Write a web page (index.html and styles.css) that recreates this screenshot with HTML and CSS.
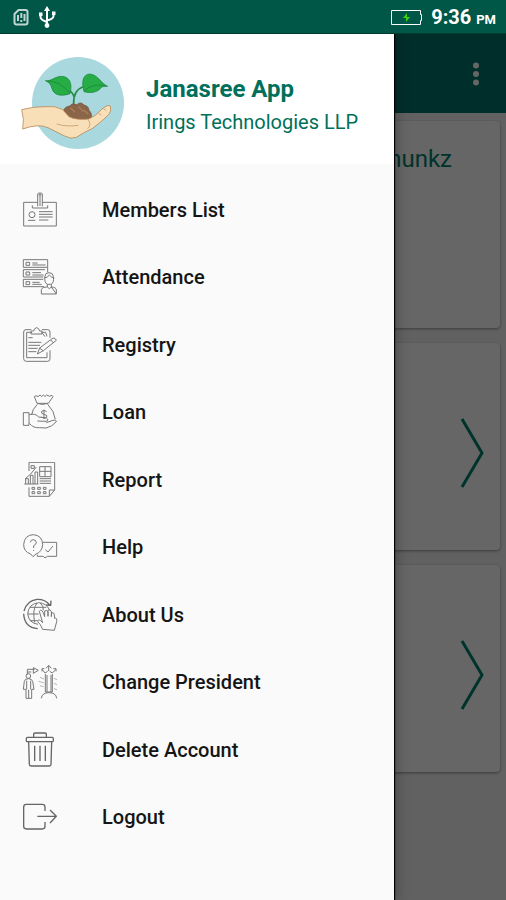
FILE: index.html
```html
<!DOCTYPE html>
<html lang="en">
<head>
<meta charset="utf-8">
<meta name="viewport" content="width=device-width, initial-scale=1">
<title>Janasree App</title>
<link rel="stylesheet" href="styles.css">
</head>
<body>
<div class="screen">
  <header class="status">
    <div class="status-group">
      <svg class="status-sim" viewBox="0 0 18 20" aria-hidden="true"><path d="M6.500 3h7q2 0 2 2v10.500q0 2-2 2h-9q-2 0-2-2V7z"/><path d="M6 8v6M12.500 7v7M9.300 6v5M9.300 13v2"/></svg>
      <svg class="status-usb" viewBox="0 0 18 22" aria-hidden="true"><path d="M9 3v16M2.500 8v3q0 3 6.500 5M15.500 7v3q0 3-6.500 4.500"/><path class="solid" d="M9 0l3 5H6zM1 6.500h3.500v3.500H1zM14 5.500h3.500V9H14z"/><circle class="solid" cx="9" cy="19.500" r="2.400"/></svg>
    </div>
    <div class="status-group">
      <svg class="status-battery" viewBox="0 0 33 17" aria-hidden="true"><path d="M1.500 1.500h29v4h1v6h-1v4h-29z"/><path class="bolt" d="M17 4l-4 5h3v4l4-5h-3z"/></svg>
      <span class="clock">9:36 <small>PM</small></span>
    </div>
  </header>

  <div class="stage">
    <div class="app">
      <div class="toolbar">
        <button class="more" type="button" aria-label="More options"><svg viewBox="0 0 8 24" aria-hidden="true"><circle cx="4" cy="3.500" r="3"/><circle cx="4" cy="12" r="3"/><circle cx="4" cy="20.500" r="3"/></svg></button>
      </div>
      <main class="cards">
        <section class="card card-title"><h2>hunkz</h2></section>
        <section class="card"><svg class="chevron" viewBox="0 0 24 72" aria-hidden="true"><path d="M2 2l20 34L2 70"/></svg></section>
        <section class="card"><svg class="chevron" viewBox="0 0 24 72" aria-hidden="true"><path d="M2 2l20 34L2 70"/></svg></section>
      </main>
    </div>
    <div class="scrim"></div>

    <aside class="drawer">
      <div class="profile">
        <svg class="logo" viewBox="60 165 315 285" aria-hidden="true">
          <circle cx="234" cy="309" r="138" fill="#a9d9df"/>
          <path d="M221 312C220 290 228 268 249 260M222 290C218 278 213 273 204 270" fill="none" stroke="#278d48" stroke-width="5"/>
          <path d="M136 242C156 244 163 230 184 229C207 229 219 249 210 281C184 290 162 286 156 266C153 254 148 247 136 242z" fill="#27ad45" stroke="#168139" stroke-width="2"/>
          <path d="M323 259C303 250 294 224 269 222C250 223 243 243 252 275C272 281 295 276 302 264C309 258 315 259 323 259z" fill="#27ad45" stroke="#168139" stroke-width="2"/>
          <path d="M142 243Q182 244 209 279M318 258Q279 248 253 272" fill="none" stroke="#168139" stroke-width="2"/>
          <path d="M189 336Q193 320 209 318Q217 307 230 314Q242 303 252 315Q266 318 267 331Q279 342 272 358Q241 366 210 356Q192 349 189 336z" fill="#8b6547" stroke="#6d4e37" stroke-width="2"/>
          <path d="M211 324l14 12M235 319l15 16M251 330l14 13" fill="none" stroke="#a77f5d" stroke-width="4"/>
          <path d="M65 329Q101 319 137 320Q165 316 187 328L207 350Q229 361 266 357Q286 350 306 327Q325 312 331 318Q335 331 327 343Q304 366 278 385Q252 397 229 412Q214 419 194 408Q167 395 144 383Q115 370 68 387Q74 359 65 329z" fill="#f9dfb8" stroke="#b7895c" stroke-width="2.500"/>
          <path d="M170 372Q199 381 235 376M264 358Q276 374 263 386M295 339l9 7M310 325l9 7" fill="none" stroke="#c79a6b" stroke-width="2.500"/>
        </svg>
        <div class="profile-text">
          <h1>Janasree App</h1>
          <p>Irings Technologies LLP</p>
        </div>
      </div>
      <nav class="menu">
        <a href="#members"><svg class="icon" viewBox="66 48 108 108" aria-hidden="true"><path d="M112 79H71v71h98V79h-41M113 91V54q0-3 7-3t7 3v37M120 52v38M116 57h8M97 88v8h46v-8"/><circle cx="96" cy="116" r="9"/><path d="M84 133h22M117 107h41M117 115h41M117 123h41M117 132h28"/></svg>Members List</a>
        <a href="#attendance"><svg class="icon" viewBox="66 250 108 108" aria-hidden="true"><path d="M70 252h73v23H70zM70 282h65M70 282v22h60M143 275v15M70 311h60M70 311v22h62M78 260h11v9H78zM78 289h11v9H78zM78 318h11v9H78zM97 262h16M97 268h40M97 291h26M97 298h34M97 320h22M97 326h28"/><path d="M135 302q0-11 12-11t13 11q3 20-7 24h-11q-10-5-7-24zM132 307q11-1 16-9q6 8 15 9M142 326v8l6 5 6-5v-8M124 355v-13q2-8 18-8M154 334q15 1 15 9v12zM124 355h45"/></svg>Attendance</a>
        <a href="#registry"><svg class="icon" viewBox="66 48 108 108" aria-hidden="true"><path d="M94 56H78q-7 0-7 7v80q0 8 8 8h64q7 0 7-8v-25M126 56h17q7 0 7 7v17M96 64H80v76h61v-16M125 64h12l4 12M93 69V60h8q3-10 9-10t9 10h7v9zM85 80h13M85 94h39M85 103h35M85 112h28M85 122h24M112 129l7-18 40-30q7-1 10 7l-39 31zM119 111l11 9M152 87l9 9M126 65l9 12"/></svg>Registry</a>
        <a href="#loan"><svg class="icon" viewBox="66 250 108 108" aria-hidden="true"><path d="M111 278l-8-20q5-6 11 0l6-5q5 9 10 0 5 9 10 0 8 7 16 1l3 4-14 20zM112 278q15 7 31 0M112 281q-16 16-17 31M143 281q20 20 23 45M132 297v28M140 303q-8-7-15-1-3 7 7 9 13 3 8 9-8 6-16-1"/><path d="M70 306h17v38H70zM88 312q18-5 28 7l23 3q10 7-1 10l-26-1M88 338q12 15 31 13l19 1q18-3 32-20-6-7-17-1l-14 5"/></svg>Loan</a>
        <a href="#report"><svg class="icon" viewBox="66 48 108 108" aria-hidden="true"><path d="M87 75V49h77v83l-16 19H87v-27M164 132h-16v19M119 62h34v30h-34zM135 62v30M119 76h34M119 98h34M119 105h34M119 112h34M77 114V98h8v16M91 114V88h8v26M105 114V78h8v36M73 114h42M75 99l17-15 17-21M93 59h10v8H93zM96 124h8v6h-8zM113 124h8v6h-8zM130 124h8v6h-8zM96 137h8v6h-8zM113 137h8v6h-8zM130 137h8v6h-8z"/></svg>Report</a>
        <a href="#help"><svg class="icon" viewBox="66 250 108 108" aria-hidden="true"><path d="M92 325q-21-7-21-28 2-29 29-30 27 2 28 30-2 22-20 28l-9 8zM91 290q1-8 9-8 9 1 9 9-1 6-8 9v7M101 313v3M129 290h41v42h-28l-7 5-5-5h-18v-5M136 312l8 7 15-18"/></svg>Help</a>
        <a href="#about"><svg class="icon" viewBox="66 48 108 108" aria-hidden="true"><path class="bold" d="M72 90q8-31 39-35 24-1 38 17M153 59l-1 14-14-1M71 98q2 41 42 45"/><path d="M114 130q-27-4-31-31 3-31 33-34 24 2 32 21M111 66q-15 20-7 58M121 66q10 9 9 22M89 79h50M84 99h32M89 119h24"/><path d="M128 145q-7-17-15-23 1-8 9-3l6 6-10-34q6-8 11 3l5 13V90q7-5 10 3v13-19q8-3 10 5v15l1-12q8-1 8 7l1 10q8-3 6 10l-7 26z"/></svg>About Us</a>
        <a href="#president"><svg class="icon" viewBox="66 250 108 108" aria-hidden="true"><circle cx="85" cy="286" r="7"/><path d="M73 302q1-8 12-8t13 8l4 24h-7v27H78v-27h-8zM80 300v26M92 300v26M86 327v26M82 282v-16h22M82 274h12M100 261l15 8-15 9z"/><path d="M138 263l8-9 8 9M146 255v16M126 266l9 11 8-5M168 266l-11 11-8-5M126 272v-8h7M160 264h8v8M136 280v54h21v-54M141 283v51M153 283v51M124 353q2-17 23-17t23 17"/><path class="faint" d="M120 290l12 5M116 302l16 5M120 315l11 3M162 293l9 4M162 308l9 4M162 324l9 3"/></svg>Change President</a>
        <a href="#delete"><svg class="icon" viewBox="66 48 108 108" aria-hidden="true"><path class="bold" d="M101 62v-8q0-3 4-3h30q4 0 4 3v8M82 64h75q3 0 3 4v6q0 3-3 3H82q-3 0-3-3v-6q0-4 3-4zM86 78l2 67q0 5 5 5h55q5 0 5-5l2-67M104 89v46M120 89v46M136 89v46"/></svg>Delete Account</a>
        <a href="#logout"><svg class="icon" viewBox="66 250 108 108" aria-hidden="true"><path class="bold" d="M135 286v-12q0-8-8-8H79q-8 0-8 8v58q0 8 8 8h48q8 0 8-8v-13M112 302h56M150 283l19 19-19 20"/></svg>Logout</a>
      </nav>
    </aside>
  </div>
</div>
</body>
</html>
```
FILE: styles.css
```css
* {
  box-sizing: border-box;
}

body {
  margin: 0;
  font-family: Roboto, "Liberation Sans", sans-serif;
}

h1,
h2,
p {
  margin: 0;
}

.screen {
  display: flex;
  flex-direction: column;
  min-height: 100vh;
}

.status {
  display: flex;
  justify-content: space-between;
  align-items: center;
  height: 34px;
  padding: 0 10px 0 12px;
  background: #005748;
  box-shadow: inset 0 -1px #003d2c;
  color: #fff;
}

.status-group {
  display: flex;
  align-items: center;
  gap: 8px;
}

.status svg {
  fill: none;
  stroke: #fff;
}

.status-sim {
  width: 18px;
  height: 20px;
  stroke-width: 2;
  opacity: 0.75;
}

.status-usb {
  width: 18px;
  height: 22px;
  stroke-width: 2;
}

.status .solid {
  fill: #fff;
  stroke: none;
}

.status-battery {
  width: 33px;
  height: 17px;
  stroke-width: 1;
}

.status .bolt {
  fill: #35d313;
  stroke: none;
}

.clock {
  font-size: 20px;
  font-weight: 700;
  white-space: nowrap;
}

.clock small {
  font-size: 13px;
}

.stage {
  position: relative;
  flex: 1;
  display: flex;
  overflow: hidden;
}

.app {
  flex: 1;
  background: #f2f2f2;
}

.toolbar {
  display: flex;
  justify-content: flex-end;
  align-items: center;
  height: 79px;
  padding-right: 18px;
  background: #00736a;
}

.more {
  display: flex;
  padding: 8px;
  border: 0;
  background: none;
}

.more svg {
  width: 8px;
  height: 24px;
  fill: #fff;
}

.cards {
  display: grid;
  gap: 15px;
  padding: 8px 6px;
}

.card {
  display: flex;
  justify-content: flex-end;
  align-items: center;
  height: 207px;
  padding: 12px 16px 0 0;
  border-radius: 4px;
  background: #fff;
  box-shadow: 0 1px 3px rgba(0, 0, 0, 0.4);
}

.card-title {
  align-items: flex-start;
  padding: 24px 48px 0 0;
}

.card h2 {
  color: #00806c;
  font-size: 24px;
  font-weight: 400;
  line-height: 28px;
}

.chevron {
  width: 24px;
  height: 72px;
  fill: none;
  stroke: #00806c;
  stroke-width: 3;
}

.scrim {
  position: absolute;
  inset: 0;
  background: rgba(0, 0, 0, 0.6);
}

.drawer {
  position: absolute;
  inset: 0 112px 0 0;
  background: #fafafa;
  box-shadow: 1px 0 1px #000, 2px 0 12px rgba(0, 0, 0, 0.3);
}

.profile {
  display: flex;
  align-items: center;
  gap: 21px;
  height: 130px;
  padding: 6px 20px 0 20px;
  background: #fff;
}

.logo {
  flex: none;
  width: 105px;
  height: 95px;
}

.profile-text {
  padding-top: 5px;
  color: #00705a;
  white-space: nowrap;
}

.profile h1 {
  font-size: 24px;
  font-weight: 700;
  line-height: 34px;
}

.profile p {
  font-size: 20px;
  line-height: 32px;
}

.menu {
  display: grid;
  grid-auto-rows: 67px 68px;
  padding-top: 12px;
}

.menu a {
  display: flex;
  align-items: center;
  gap: 44px;
  padding-left: 22px;
  color: #151515;
  font-size: 20px;
  font-weight: 500;
  text-decoration: none;
}

.icon {
  width: 36px;
  height: 36px;
  fill: none;
  stroke: #777;
  stroke-width: 3;
  stroke-linejoin: round;
}

.icon .bold {
  stroke: #666;
  stroke-width: 4;
}

.icon .faint {
  stroke: #b5b5b5;
}
```
